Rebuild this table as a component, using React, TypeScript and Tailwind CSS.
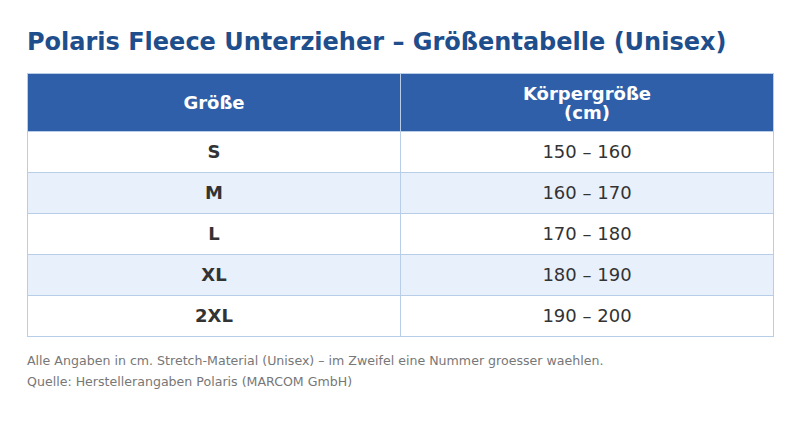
const rows = [
  { size: 'S', height: '150 – 160' },
  { size: 'M', height: '160 – 170' },
  { size: 'L', height: '170 – 180' },
  { size: 'XL', height: '180 – 190' },
  { size: '2XL', height: '190 – 200' },
];

export default function App() {
  return (
    <div className="min-h-[430px] w-[800px] bg-white px-[27px] pt-[26px] font-['DejaVu_Sans',sans-serif]">
      <h1 className="text-[24px] leading-[32px] font-bold text-[#1f4e8c]">
        Polaris Fleece Unterzieher – Größentabelle (Unisex)
      </h1>

      <table className="mt-[15px] w-[747px] border-collapse border border-[#b7cde8] text-[18px]">
        <thead>
          <tr className="h-[58px] bg-[#2f5fa9] text-white">
            <th className="w-1/2 border border-[#b7cde8] font-bold leading-[19px]">Größe</th>
            <th className="w-1/2 border border-[#b7cde8] font-bold leading-[19px]">
              Körpergröße
              <br />
              (cm)
            </th>
          </tr>
        </thead>
        <tbody>
          {rows.map((row, i) => (
            <tr key={row.size} className={`h-[41px] ${i % 2 === 1 ? 'bg-[#e8f0fb]' : 'bg-white'}`}>
              <td className="border border-[#b7cde8] pb-[1px] text-center font-bold text-[#333333]">{row.size}</td>
              <td className="border border-[#b7cde8] pb-[1px] text-center text-[#333333]">{row.height}</td>
            </tr>
          ))}
        </tbody>
      </table>

      <div className="mt-[13px] text-[12.6px] leading-[21px] text-[#777777]">
        <p>Alle Angaben in cm. Stretch-Material (Unisex) – im Zweifel eine Nummer groesser waehlen.</p>
        <p>Quelle: Herstellerangaben Polaris (MARCOM GmbH)</p>
      </div>
    </div>
  );
}
